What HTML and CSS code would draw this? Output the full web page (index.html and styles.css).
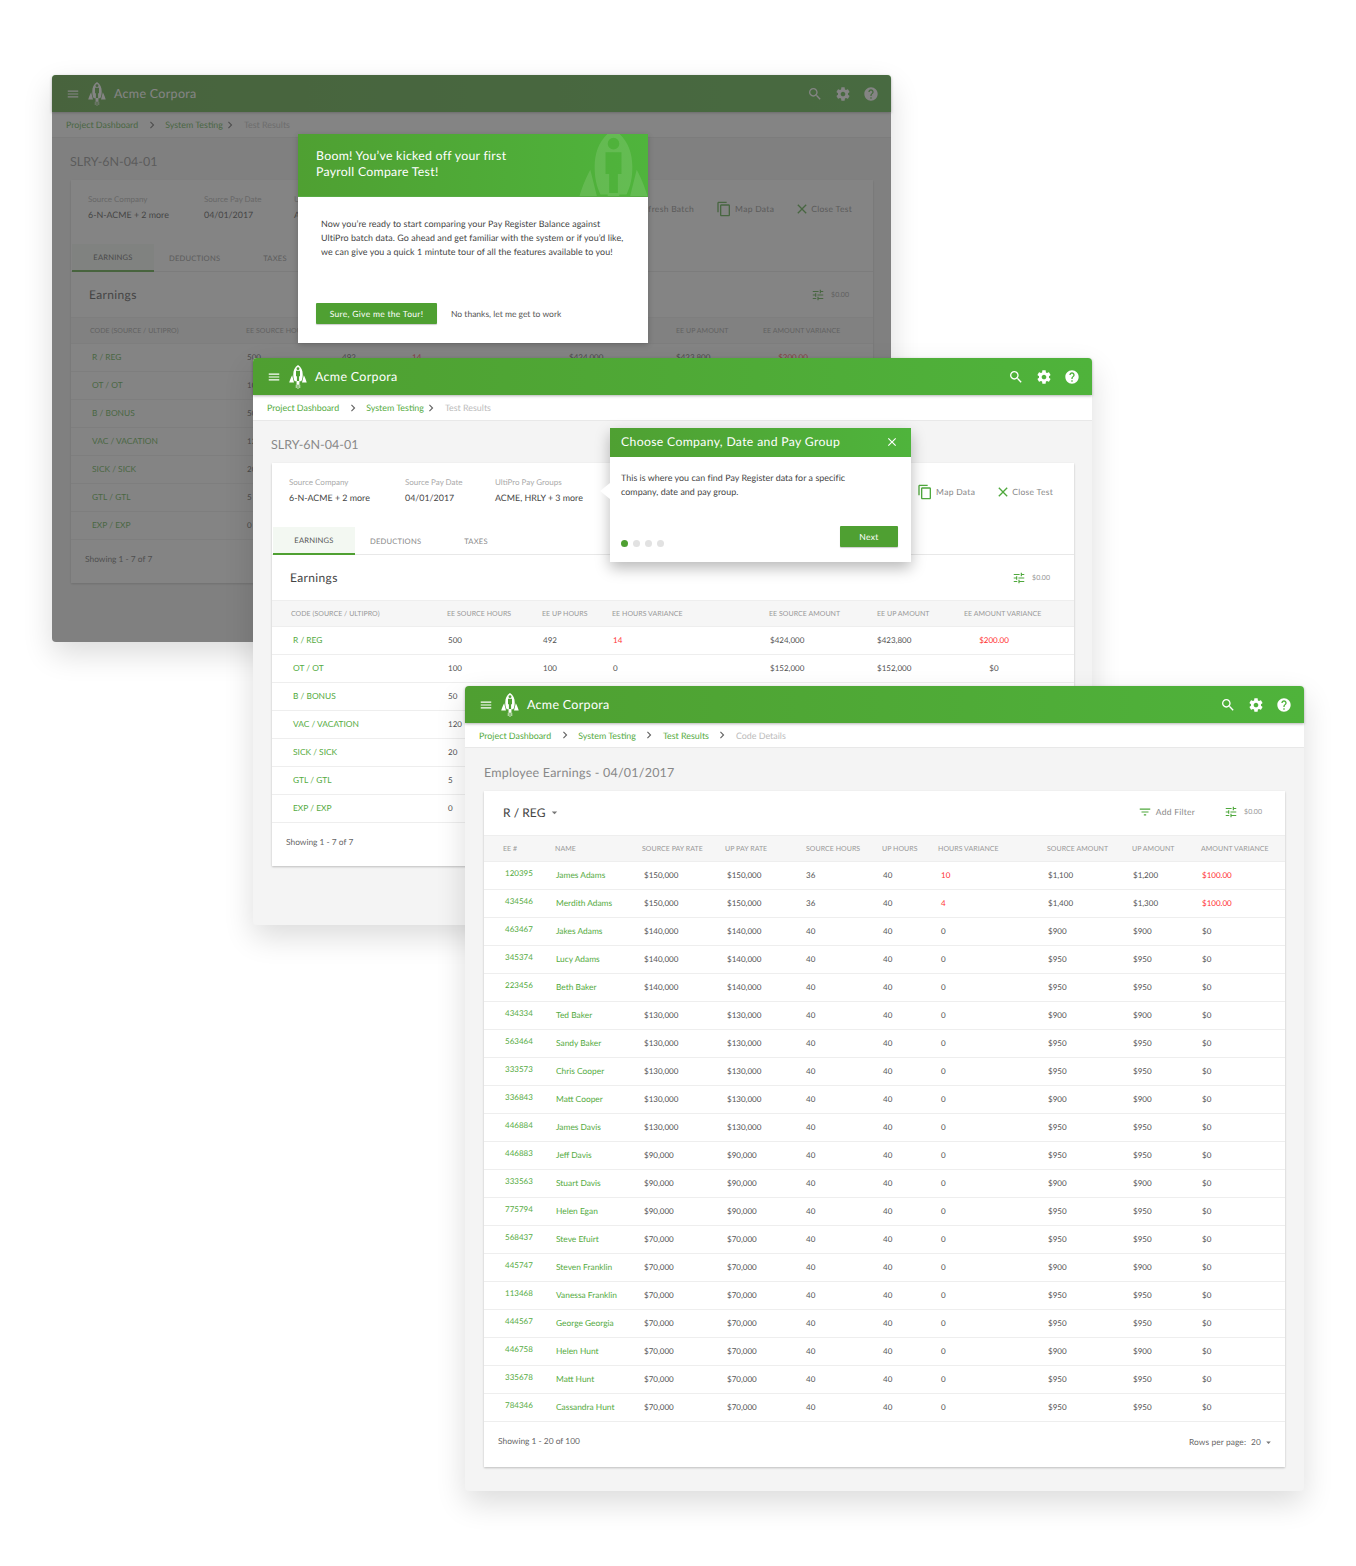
FILE: index.html
```html
<!DOCTYPE html>
<html lang="en">
<head>
<meta charset="utf-8">
<title>Payroll Compare</title>
<link rel="stylesheet" href="styles.css">
</head>
<body>
<svg class="sprite" width="0" height="0" aria-hidden="true">
<symbol id="i-menu" viewBox="0 0 24 24"><path d="M3 18h18v-2H3v2zm0-5h18v-2H3v2zm0-7v2h18V6H3z"/></symbol>
<symbol id="i-search" viewBox="0 0 24 24"><path d="M15.5 14h-.79l-.28-.27C15.41 12.59 16 11.11 16 9.5 16 5.91 13.09 3 9.5 3S3 5.91 3 9.5 5.91 16 9.5 16c1.61 0 3.09-.59 4.23-1.57l.27.28v.79l5 4.99L20.49 19l-4.99-5zm-6 0C7.01 14 5 11.99 5 9.5S7.01 5 9.5 5 14 7.01 14 9.5 11.99 14 9.5 14z"/></symbol>
<symbol id="i-gear" viewBox="0 0 24 24"><path d="M19.43 12.98c.04-.32.07-.64.07-.98s-.03-.66-.07-.98l2.11-1.65c.19-.15.24-.42.12-.64l-2-3.46c-.12-.22-.39-.3-.61-.22l-2.49 1c-.52-.4-1.08-.73-1.69-.98l-.38-2.65C14.46 2.18 14.25 2 14 2h-4c-.25 0-.46.18-.49.42l-.38 2.65c-.61.25-1.17.59-1.69.98l-2.49-1c-.23-.09-.49 0-.61.22l-2 3.46c-.13.22-.07.49.12.64l2.11 1.65c-.04.32-.07.65-.07.98s.03.66.07.98l-2.11 1.65c-.19.15-.24.42-.12.64l2 3.46c.12.22.39.3.61.22l2.49-1c.52.4 1.08.73 1.69.98l.38 2.65c.03.24.24.42.49.42h4c.25 0 .46-.18.49-.42l.38-2.65c.61-.25 1.17-.59 1.69-.98l2.49 1c.23.09.49 0 .61-.22l2-3.46c.12-.22.07-.49-.12-.64l-2.11-1.65zM12 15.5c-1.93 0-3.5-1.57-3.5-3.5s1.57-3.5 3.5-3.5 3.5 1.57 3.5 3.5-1.57 3.5-3.5 3.5z"/></symbol>
<symbol id="i-help" viewBox="0 0 24 24"><path d="M12 2C6.48 2 2 6.48 2 12s4.48 10 10 10 10-4.48 10-10S17.52 2 12 2zm1 17h-2v-2h2v2zm2.07-7.75l-.9.92C13.45 12.9 13 13.5 13 15h-2v-.5c0-1.1.45-2.1 1.17-2.83l1.24-1.26c.37-.36.59-.86.59-1.41 0-1.1-.9-2-2-2s-2 .9-2 2H8c0-2.21 1.79-4 4-4s4 1.79 4 4c0 .88-.36 1.68-.93 2.25z"/></symbol>
<symbol id="i-copy" viewBox="0 0 24 24"><path d="M16 1H4c-1.1 0-2 .9-2 2v14h2V3h12V1zm3 4H8c-1.1 0-2 .9-2 2v14c0 1.1.9 2 2 2h11c1.1 0 2-.9 2-2V7c0-1.1-.9-2-2-2zm0 16H8V7h11v14z"/></symbol>
<symbol id="i-close" viewBox="0 0 24 24"><path d="M19 6.41L17.59 5 12 10.59 6.41 5 5 6.41 10.59 12 5 17.59 6.41 19 12 13.41 17.59 19 19 17.59 13.41 12z"/></symbol>
<symbol id="i-tune" viewBox="0 0 24 24"><path d="M3 17v2h6v-2H3zM3 5v2h10V5H3zm10 16v-2h8v-2h-8v-2h-2v6h2zM7 9v2H3v2h4v2h2V9H7zm14 4v-2H11v2h10zm-6-4h2V7h4V5h-4V3h-2v6z"/></symbol>
<symbol id="i-filter" viewBox="0 0 24 24"><path d="M10 18h4v-2h-4v2zM3 6v2h18V6H3zm3 7h12v-2H6v2z"/></symbol>
<symbol id="i-chev" viewBox="0 0 24 24"><path d="M10 6L8.59 7.41 13.17 12l-4.58 4.59L10 18l6-6z"/></symbol>
<symbol id="i-caret" viewBox="0 0 24 24"><path d="M7 10l5 5 5-5z"/></symbol>
<symbol id="i-refresh" viewBox="0 0 24 24"><path d="M17.65 6.35A7.95 7.95 0 0 0 12 4a8 8 0 1 0 7.73 10h-2.08A6 6 0 1 1 12 6c1.66 0 3.14.69 4.22 1.78L13 11h7V4l-2.35 2.35z"/></symbol>
<symbol id="i-rocket" viewBox="0 0 60 66"><path fill-rule="evenodd" d="M30 0c9 6 13 15 13 26 0 7-1 13-4 19h-5v9h-8v-9h-5c-3-6-4-12-4-19C17 15 21 6 30 0zm0 6a4 4 0 1 0 0 8 4 4 0 0 0 0-8zm-5.500 10v15H27v13h6V31h2.500V16z"/><path d="M14 28l5 20H6c0 0 3-11 8-20zM46 28l-5 20h13c0 0-3-11-8-20zM24 54h2v9h-2zM29 54h2v12h-2zM34 54h2v9h-2z"/></symbol>
</svg>

<main class="canvas">

<section class="win win-back">
  <header class="bar">
    <svg class="ic-menu"><use href="#i-menu"/></svg>
    <svg class="logo"><use href="#i-rocket"/></svg>
    <span class="brand">Acme Corpora</span>
    <span class="bar-icons">
      <svg class="ic-bar"><use href="#i-search"/></svg>
      <svg class="ic-bar"><use href="#i-gear"/></svg>
      <svg class="ic-bar"><use href="#i-help"/></svg>
    </span>
  </header>
  <nav class="crumbs">
    <a class="crumb crumb-wide">Project Dashboard</a><svg class="chev"><use href="#i-chev"/></svg>
    <a class="crumb">System Testing</a><svg class="chev chev-tight"><use href="#i-chev"/></svg>
    <span class="crumb-off">Test Results</span>
  </nav>
  <div class="body">
    <h1 class="page-title">SLRY-6N-04-01</h1>
    <div class="card">
      <div class="info">
        <div class="info-col c1"><div class="lbl">Source Company</div><div class="val">6-N-ACME + 2 more</div></div>
        <div class="info-col c2"><div class="lbl">Source Pay Date</div><div class="val">04/01/2017</div></div>
        <div class="info-col"><div class="lbl">UltiPro Pay Groups</div><div class="val">ACME, HRLY + 3 more</div></div>
        <div class="actions">
          <span class="act act-first"><svg class="ic-act"><use href="#i-refresh"/></svg>Refresh Batch</span>
          <span class="act"><svg class="ic-act"><use href="#i-copy"/></svg>Map Data</span>
          <span class="act act-close"><svg class="ic-act"><use href="#i-close"/></svg>Close Test</span>
        </div>
      </div>
      <div class="tabs"><span class="tab on">EARNINGS</span><span class="tab t2">DEDUCTIONS</span><span class="tab t3">TAXES</span></div>
      <div class="tools"><h2 class="card-title">Earnings</h2><span class="tool-money"><svg class="ic-tune"><use href="#i-tune"/></svg><span>$0.00</span></span></div>
      <div class="row gsum head"><span>CODE (SOURCE / ULTIPRO)</span><span>EE SOURCE HOURS</span><span>EE UP HOURS</span><span>EE HOURS VARIANCE</span><span>EE SOURCE AMOUNT</span><span>EE UP AMOUNT</span><span>EE AMOUNT VARIANCE</span></div>
      <div class="row gsum"><a>R / REG</a><span>500</span><span>492</span><span class="red">14</span><span>$424,000</span><span>$423,800</span><span class="red mid">$200.00</span></div>
      <div class="row gsum"><a>OT / OT</a><span>100</span></div>
      <div class="row gsum"><a>B / BONUS</a><span>50</span></div>
      <div class="row gsum"><a>VAC / VACATION</a><span>120</span></div>
      <div class="row gsum"><a>SICK / SICK</a><span>20</span></div>
      <div class="row gsum"><a>GTL / GTL</a><span>5</span></div>
      <div class="row gsum"><a>EXP / EXP</a><span>0</span></div>
      <div class="foot foot-sum">Showing 1 - 7 of 7</div>
    </div>
  </div>
  <div class="shade"></div>
  <div class="modal">
    <div class="modal-head">
      <p class="modal-title">Boom! You’ve kicked off your first<br>Payroll Compare Test!</p>
      <svg class="modal-mark"><use href="#i-rocket"/></svg>
    </div>
    <div class="modal-body">
      <p class="modal-text">Now you’re ready to start comparing your Pay Register Balance against<br>UltiPro batch data. Go ahead and get familiar with the system or if you’d like,<br>we can give you a quick 1 mintute tour of all the features available to you!</p>
      <div class="modal-actions"><span class="btn btn-tour">Sure, Give me the Tour!</span><span class="no-thanks">No thanks, let me get to work</span></div>
    </div>
  </div>
</section>

<section class="win win-mid">
  <header class="bar">
    <svg class="ic-menu"><use href="#i-menu"/></svg>
    <svg class="logo"><use href="#i-rocket"/></svg>
    <span class="brand">Acme Corpora</span>
    <span class="bar-icons">
      <svg class="ic-bar"><use href="#i-search"/></svg>
      <svg class="ic-bar"><use href="#i-gear"/></svg>
      <svg class="ic-bar"><use href="#i-help"/></svg>
    </span>
  </header>
  <nav class="crumbs">
    <a class="crumb crumb-wide">Project Dashboard</a><svg class="chev"><use href="#i-chev"/></svg>
    <a class="crumb">System Testing</a><svg class="chev chev-tight"><use href="#i-chev"/></svg>
    <span class="crumb-off">Test Results</span>
  </nav>
  <div class="body">
    <h1 class="page-title">SLRY-6N-04-01</h1>
    <div class="card">
      <div class="info">
        <div class="info-col c1"><div class="lbl">Source Company</div><div class="val">6-N-ACME + 2 more</div></div>
        <div class="info-col c2"><div class="lbl">Source Pay Date</div><div class="val">04/01/2017</div></div>
        <div class="info-col"><div class="lbl">UltiPro Pay Groups</div><div class="val">ACME, HRLY + 3 more</div></div>
        <div class="actions">
          <span class="act act-first"><svg class="ic-act"><use href="#i-refresh"/></svg>Refresh Batch</span>
          <span class="act"><svg class="ic-act"><use href="#i-copy"/></svg>Map Data</span>
          <span class="act act-close"><svg class="ic-act"><use href="#i-close"/></svg>Close Test</span>
        </div>
      </div>
      <div class="tabs"><span class="tab on">EARNINGS</span><span class="tab t2">DEDUCTIONS</span><span class="tab t3">TAXES</span></div>
      <div class="tools"><h2 class="card-title">Earnings</h2><span class="tool-money"><svg class="ic-tune"><use href="#i-tune"/></svg><span>$0.00</span></span></div>
      <div class="row gsum head"><span>CODE (SOURCE / ULTIPRO)</span><span>EE SOURCE HOURS</span><span>EE UP HOURS</span><span>EE HOURS VARIANCE</span><span>EE SOURCE AMOUNT</span><span>EE UP AMOUNT</span><span>EE AMOUNT VARIANCE</span></div>
      <div class="row gsum"><a>R / REG</a><span>500</span><span>492</span><span class="red">14</span><span>$424,000</span><span>$423,800</span><span class="red mid">$200.00</span></div>
      <div class="row gsum"><a>OT / OT</a><span>100</span><span>100</span><span>0</span><span>$152,000</span><span>$152,000</span><span class="mid">$0</span></div>
      <div class="row gsum"><a>B / BONUS</a><span>50</span></div>
      <div class="row gsum"><a>VAC / VACATION</a><span>120</span></div>
      <div class="row gsum"><a>SICK / SICK</a><span>20</span></div>
      <div class="row gsum"><a>GTL / GTL</a><span>5</span></div>
      <div class="row gsum"><a>EXP / EXP</a><span>0</span></div>
      <div class="foot foot-sum">Showing 1 - 7 of 7</div>
    </div>
  </div>
  <div class="pop">
    <div class="pop-head"><span>Choose Company, Date and Pay Group</span><svg class="ic-pop"><use href="#i-close"/></svg></div>
    <p class="pop-text">This is where you can find Pay Register data for a specific<br>company, date and pay group.</p>
    <div class="pop-foot">
      <span class="dots"><i class="dot on"></i><i class="dot"></i><i class="dot"></i><i class="dot"></i></span>
      <span class="btn btn-next">Next</span>
    </div>
  </div>
</section>

<section class="win win-front">
  <header class="bar">
    <svg class="ic-menu"><use href="#i-menu"/></svg>
    <svg class="logo"><use href="#i-rocket"/></svg>
    <span class="brand">Acme Corpora</span>
    <span class="bar-icons">
      <svg class="ic-bar"><use href="#i-search"/></svg>
      <svg class="ic-bar"><use href="#i-gear"/></svg>
      <svg class="ic-bar"><use href="#i-help"/></svg>
    </span>
  </header>
  <nav class="crumbs crumbs-front">
    <a class="crumb crumb-wide">Project Dashboard</a><svg class="chev"><use href="#i-chev"/></svg>
    <a class="crumb">System Testing</a><svg class="chev"><use href="#i-chev"/></svg>
    <a class="crumb">Test Results</a><svg class="chev"><use href="#i-chev"/></svg>
    <span class="crumb-off">Code Details</span>
  </nav>
  <div class="body body-front">
    <h1 class="page-title title-front">Employee Earnings - 04/01/2017</h1>
    <div class="card">
      <div class="tools">
        <h2 class="card-title">R / REG<svg class="caret"><use href="#i-caret"/></svg></h2>
        <span class="add-filter"><svg class="ic-filter"><use href="#i-filter"/></svg>Add Filter</span>
        <span class="tool-money tool-front"><svg class="ic-tune"><use href="#i-tune"/></svg><span>$0.00</span></span>
      </div>
      <div class="row gemp head"><span>EE #</span><span>NAME</span><span>SOURCE PAY RATE</span><span>UP PAY RATE</span><span>SOURCE HOURS</span><span>UP HOURS</span><span>HOURS VARIANCE</span><span>SOURCE AMOUNT</span><span>UP AMOUNT</span><span>AMOUNT VARIANCE</span></div>
      <div class="row gemp"><a class="ee">120395</a><a>James Adams</a><span>$150,000</span><span>$150,000</span><span>36</span><span>40</span><span class="red">10</span><span>$1,100</span><span>$1,200</span><span class="red">$100.00</span></div>
      <div class="row gemp"><a class="ee">434546</a><a>Merdith Adams</a><span>$150,000</span><span>$150,000</span><span>36</span><span>40</span><span class="red">4</span><span>$1,400</span><span>$1,300</span><span class="red">$100.00</span></div>
      <div class="row gemp"><a class="ee">463467</a><a>Jakes Adams</a><span>$140,000</span><span>$140,000</span><span>40</span><span>40</span><span>0</span><span>$900</span><span>$900</span><span>$0</span></div>
      <div class="row gemp"><a class="ee">345374</a><a>Lucy Adams</a><span>$140,000</span><span>$140,000</span><span>40</span><span>40</span><span>0</span><span>$950</span><span>$950</span><span>$0</span></div>
      <div class="row gemp"><a class="ee">223456</a><a>Beth Baker</a><span>$140,000</span><span>$140,000</span><span>40</span><span>40</span><span>0</span><span>$950</span><span>$950</span><span>$0</span></div>
      <div class="row gemp"><a class="ee">434334</a><a>Ted Baker</a><span>$130,000</span><span>$130,000</span><span>40</span><span>40</span><span>0</span><span>$900</span><span>$900</span><span>$0</span></div>
      <div class="row gemp"><a class="ee">563464</a><a>Sandy Baker</a><span>$130,000</span><span>$130,000</span><span>40</span><span>40</span><span>0</span><span>$950</span><span>$950</span><span>$0</span></div>
      <div class="row gemp"><a class="ee">333573</a><a>Chris Cooper</a><span>$130,000</span><span>$130,000</span><span>40</span><span>40</span><span>0</span><span>$950</span><span>$950</span><span>$0</span></div>
      <div class="row gemp"><a class="ee">336843</a><a>Matt Cooper</a><span>$130,000</span><span>$130,000</span><span>40</span><span>40</span><span>0</span><span>$900</span><span>$900</span><span>$0</span></div>
      <div class="row gemp"><a class="ee">446884</a><a>James Davis</a><span>$130,000</span><span>$130,000</span><span>40</span><span>40</span><span>0</span><span>$950</span><span>$950</span><span>$0</span></div>
      <div class="row gemp"><a class="ee">446883</a><a>Jeff Davis</a><span>$90,000</span><span>$90,000</span><span>40</span><span>40</span><span>0</span><span>$950</span><span>$950</span><span>$0</span></div>
      <div class="row gemp"><a class="ee">333563</a><a>Stuart Davis</a><span>$90,000</span><span>$90,000</span><span>40</span><span>40</span><span>0</span><span>$900</span><span>$900</span><span>$0</span></div>
      <div class="row gemp"><a class="ee">775794</a><a>Helen Egan</a><span>$90,000</span><span>$90,000</span><span>40</span><span>40</span><span>0</span><span>$950</span><span>$950</span><span>$0</span></div>
      <div class="row gemp"><a class="ee">568437</a><a>Steve Efuirt</a><span>$70,000</span><span>$70,000</span><span>40</span><span>40</span><span>0</span><span>$950</span><span>$950</span><span>$0</span></div>
      <div class="row gemp"><a class="ee">445747</a><a>Steven Franklin</a><span>$70,000</span><span>$70,000</span><span>40</span><span>40</span><span>0</span><span>$900</span><span>$900</span><span>$0</span></div>
      <div class="row gemp"><a class="ee">113468</a><a>Vanessa Franklin</a><span>$70,000</span><span>$70,000</span><span>40</span><span>40</span><span>0</span><span>$950</span><span>$950</span><span>$0</span></div>
      <div class="row gemp"><a class="ee">444567</a><a>George Georgia</a><span>$70,000</span><span>$70,000</span><span>40</span><span>40</span><span>0</span><span>$950</span><span>$950</span><span>$0</span></div>
      <div class="row gemp"><a class="ee">446758</a><a>Helen Hunt</a><span>$70,000</span><span>$70,000</span><span>40</span><span>40</span><span>0</span><span>$900</span><span>$900</span><span>$0</span></div>
      <div class="row gemp"><a class="ee">335678</a><a>Matt Hunt</a><span>$70,000</span><span>$70,000</span><span>40</span><span>40</span><span>0</span><span>$950</span><span>$950</span><span>$0</span></div>
      <div class="row gemp"><a class="ee">784346</a><a>Cassandra Hunt</a><span>$70,000</span><span>$70,000</span><span>40</span><span>40</span><span>0</span><span>$950</span><span>$950</span><span>$0</span></div>
      <div class="foot foot-emp"><span>Showing 1 - 20 of 100</span><span class="rpp">Rows per page:<span class="rpp-n">20</span><svg class="caret caret-sm"><use href="#i-caret"/></svg></span></div>
    </div>
  </div>
</section>

</main>
</body>
</html>
```
FILE: styles.css
```css
* { box-sizing: border-box; }
html, body { margin: 0; padding: 0; background: #fff; }
body { font-family: "Lato", "Open Sans", sans-serif; color: #555; font-size: 8.5px; text-rendering: geometricPrecision; }
.sprite { position: absolute; }
svg { fill: currentColor; display: block; flex: none; }
h1, h2, p { margin: 0; font-weight: 400; }
a { color: #55ab42; }

.canvas { position: relative; width: 1356px; height: 1566px; overflow: hidden; }
.win { position: absolute; width: 839px; background: #f4f4f4; border-radius: 4px; box-shadow: 0 12px 30px rgba(0,0,0,.14); }
.win-back { left: 52px; top: 75px; }
.win-mid { left: 253px; top: 358px; }
.win-front { left: 465px; top: 686px; }

.bar { height: 37px; display: flex; align-items: center; padding: 0 12px 0 14px; color: #fff; background: linear-gradient(90deg, #4f9f31, #4fb33b); border-radius: 4px 4px 0 0; box-shadow: 0 1px 3px rgba(0,0,0,.3); position: relative; }
.ic-menu { width: 14px; height: 14px; }
.logo { width: 22px; height: 24px; margin-left: 6px; }
.brand { margin-left: 6px; font-size: 12.5px; letter-spacing: .3px; }
.bar-icons { margin-left: auto; display: flex; gap: 12px; }
.ic-bar { width: 16px; height: 16px; }

.crumbs { height: 26px; display: flex; align-items: center; padding-left: 14px; background: #fff; border-bottom: 1px solid #e8e8e8; font-size: 8.9px; }
.crumbs-front { height: 25px; }
.crumb { color: #55ab42; }
.crumb-off { color: #bbb; }
.chev { width: 14px; height: 14px; color: #666; margin: 0 6.5px; }
.chev-tight { margin: 0 7px 0 0; }

.body { padding: 0 18px 59px 19px; }
.body-front { padding-right: 19px; padding-bottom: 24px; }
.page-title { height: 42px; display: flex; align-items: center; font-size: 12.5px; padding-top: 4px; color: #888; margin-left: -1px; }
.title-front { height: 43px; letter-spacing: .22px; padding-top: 6px; margin-left: 0; }

.card { background: #fff; box-shadow: 0 1px 2px rgba(0,0,0,.22); }
.info { height: 64px; display: flex; padding: 14px 21px 0 17px; }
.info-col { width: 90px; }
.c1 { width: 116px; }
.c2 { width: 90px; }
.lbl { font-size: 8px; color: #aaa; line-height: 11px; }
.val { font-size: 8.9px; color: #444; line-height: 12px; margin-top: 4px; white-space: nowrap; }
.actions { margin-left: auto; display: flex; gap: 20px; font-size: 8.5px; color: #888; letter-spacing: .3px; height: 30px; align-items: center; }
.act { display: flex; align-items: center; gap: 3px; white-space: nowrap; }
.act-first { margin-right: 2px; }
.act-close { gap: 1px; }
.ic-act { width: 16px; height: 16px; color: #4fa83d; }

.tabs { height: 28px; display: flex; border-bottom: 1px solid #e8e8e8; font-size: 7.6px; letter-spacing: .2px; color: #888; }
.tab { display: flex; align-items: center; }
.tab.on { width: 82px; justify-content: center; background: #f3f8f2; color: #555; border-bottom: 2px solid #4fa032; margin-left: 1px; height: 28px; }
.t2 { margin-left: 15px; }
.t3 { margin-left: 43px; }

.tools { height: 45px; display: flex; align-items: center; padding-left: 18px; padding-right: 24px; }
.win-front .tools { height: 44px; padding: 0 23px 2px 19px; }
.card-title { font-size: 12px; color: #444; letter-spacing: .35px; display: flex; align-items: center; }
.win-front .card-title { letter-spacing: .05px; }
.tool-money { margin-left: auto; display: flex; align-items: center; gap: 6px; font-size: 7px; color: #999; }
.tool-front { margin-left: 29px; }
.ic-tune { width: 14px; height: 14px; color: #4fa83d; }
.add-filter { margin-left: auto; display: flex; align-items: center; gap: 4px; font-size: 8.5px; letter-spacing: .25px; color: #888; }
.ic-filter { width: 14px; height: 14px; color: #4fa83d; }
.caret { width: 13px; height: 13px; color: #777; margin-left: 3px; }

.row { display: grid; height: 28px; align-items: center; border-top: 1px solid #eee; padding-left: 21px; padding-bottom: 2px; font-size: 8px; white-space: nowrap; }
.row a { font-size: 8.4px; }
.row .ee { font-size: 8px; padding-bottom: 4px; }
.row.head { height: 26px; background: #f6f6f6; font-size: 7px; letter-spacing: .04px; color: #999; padding-left: 19px; padding-bottom: 0; }
.gsum { grid-template-columns: 155px 95px 70px 157px 107px 87px 1fr; }
.gsum.head { grid-template-columns: 156px 95px 70px 157px 108px 87px 1fr; }
.gemp { grid-template-columns: 51px 88px 83px 79px 77px 58px 107px 85px 69px 1fr; }
.gemp.head { grid-template-columns: 52px 87px 83px 81px 76px 56px 109px 85px 69px 1fr; }
.red { color: #f33; }
.mid { width: 60px; text-align: center; }
.foot { border-top: 1px solid #eee; font-size: 8.4px; color: #666; }
.foot-sum { height: 44px; padding: 14px 0 0 14px; }
.foot-emp { height: 46px; padding: 14px 11px 0 14px; display: flex; justify-content: space-between; }
.rpp { display: flex; height: 12px; align-items: center; letter-spacing: .1px; }
.rpp-n { margin-left: 5px; }
.caret-sm { width: 11px; height: 11px; margin-left: 2px; }

.shade { position: absolute; inset: 0; background: rgba(68,68,68,.66); border-radius: 4px; }

.modal { position: absolute; left: 246px; top: 59px; width: 350px; height: 209px; background: #fff; box-shadow: 0 2px 6px rgba(0,0,0,.2); display: flex; flex-direction: column; }
.modal-head { height: 63px; flex: none; background: linear-gradient(90deg, #4fa032, #4fb43c); color: #fff; padding: 14px 0 0 18px; position: relative; overflow: hidden; border-bottom: 1px solid #58ab45; }
.modal-title { font-size: 12.3px; line-height: 16px; letter-spacing: .28px; }
.modal-mark { position: absolute; left: 272px; top: -5px; width: 87px; height: 96px; color: rgba(255,255,255,.12); }
.modal-body { flex: 1; padding: 20px 0 0 23px; display: flex; flex-direction: column; }
.modal-text { font-size: 8.9px; line-height: 14px; color: #444; letter-spacing: .08px; }
.modal-actions { margin-top: 44px; margin-left: -5px; display: flex; align-items: center; }
.btn { display: flex; align-items: center; justify-content: center; background: #4fa032; color: #fff; font-size: 8.5px; letter-spacing: .3px; border-radius: 1px; box-shadow: 0 1px 1px rgba(0,0,0,.2); }
.btn-tour { width: 121px; height: 21px; }
.no-thanks { margin-left: 14px; font-size: 8.5px; color: #555; }

.pop { position: absolute; left: 357px; top: 70px; width: 301px; height: 134px; background: #fff; box-shadow: 0 6px 14px rgba(0,0,0,.28); display: flex; flex-direction: column; }
.pop::before { content: ""; position: absolute; left: -10px; top: 55px; border-style: solid; border-width: 8px 10px 8px 0; border-color: transparent #fff transparent transparent; }
.pop-head { height: 29px; flex: none; background: linear-gradient(90deg, #4fa032, #4fb43c); color: #fff; display: flex; align-items: center; justify-content: space-between; padding: 0 12px 2px 11px; font-size: 12.2px; letter-spacing: .35px; }
.ic-pop { width: 14px; height: 14px; }
.pop-text { padding: 14px 11px 0; font-size: 8.9px; line-height: 14px; letter-spacing: .05px; color: #444; height: 63px; }
.pop-foot { display: flex; justify-content: space-between; padding: 6px 13px 0 11px; }
.dots { display: flex; gap: 5px; align-items: center; height: 14px; margin-top: 10px; }
.dot { width: 7px; height: 7px; border-radius: 50%; background: #e2e2e2; }
.dot.on { background: #4fa032; }
.btn-next { width: 58px; height: 21px; }
```
